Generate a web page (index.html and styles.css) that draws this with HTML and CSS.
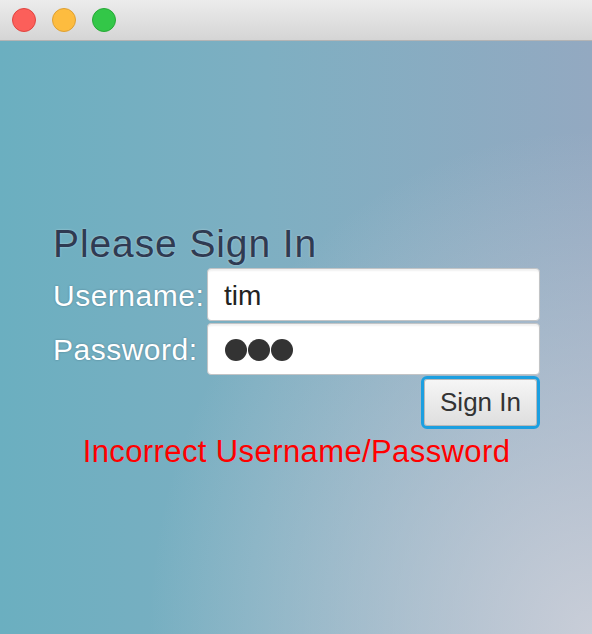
FILE: index.html
```html
<!DOCTYPE html>
<html>
<head>
<meta charset="utf-8">
<link rel="stylesheet" href="styles.css">
</head>
<body>
<div class="window">
  <div class="titlebar">
    <span class="light red"></span>
    <span class="light yellow"></span>
    <span class="light green"></span>
  </div>
  <div class="content">
    <div class="form">
      <h1 class="title">Please Sign In</h1>
      <label class="label">Username:</label>
      <div class="field"><span class="value">tim</span></div>
      <label class="label">Password:</label>
      <div class="field"><span class="dots"><span class="dot"></span><span class="dot"></span><span class="dot"></span></span></div>
      <div class="actions"><button class="btn">Sign In</button></div>
      <p class="error">Incorrect Username/Password</p>
    </div>
  </div>
</div>
</body>
</html>
```
FILE: styles.css
```css
html, body {
  margin: 0;
  padding: 0;
}
body {
  width: 592px;
  height: 634px;
  overflow: hidden;
  font-family: "Liberation Sans", Arial, sans-serif;
}
.window {
  width: 592px;
  height: 634px;
  display: flex;
  flex-direction: column;
}
.titlebar {
  height: 40px;
  flex: none;
  background: linear-gradient(to bottom, #ececec, #d5d5d5);
  border-bottom: 1px solid #b4b4b4;
  display: flex;
  align-items: center;
  gap: 16px;
  padding-left: 12px;
  box-sizing: content-box;
}
.light {
  width: 22px;
  height: 22px;
  border-radius: 50%;
  border: 1px solid;
}
.red { background: #fc5f5a; border-color: #e0443f; }
.yellow { background: #fdbc3f; border-color: #dea033; }
.green { background: #33c748; border-color: #27a936; }
.content {
  flex: 1;
  background:
    radial-gradient(ellipse 75% 85% at 100% 100%, rgba(210,212,220,0.85), rgba(210,212,220,0) 100%),
    linear-gradient(to right, #6bafc0 0%, #7eafc2 45%, #93a9c1 100%);
}
.form {
  display: grid;
  grid-template-columns: 154px 333px;
  row-gap: 2px;
  padding: 181px 0 0 53px;
}
.title {
  grid-column: 1 / 3;
  margin: 0;
  font-weight: normal;
  font-size: 39px;
  letter-spacing: 0.9px;
  line-height: 44px;
  height: 44px;
  color: #2f3b52;
  text-shadow: 0 0 2px rgba(255,255,255,0.5);
}
.label {
  color: #ffffff;
  font-size: 30px;
  letter-spacing: 0.5px;
  line-height: 30px;
  align-self: center;
  padding-top: 2px;
  text-shadow: 0 0 2px rgba(40,60,80,0.45);
}
.field {
  height: 51px;
  border: 1px solid #c2c4c6;
  border-radius: 4px;
  background: #fff;
  box-shadow: inset 0 2px 2px rgba(0,0,0,0.06);
  display: flex;
  align-items: center;
  padding-left: 16px;
}
.field + .label + .field { height: 50px; }
.value {
  font-size: 28px;
  color: #222;
  padding-top: 2px;
}
.dots {
  display: flex;
  gap: 1px;
  margin-left: 1px;
  padding-top: 1px;
}
.dot {
  width: 22px;
  height: 22px;
  border-radius: 50%;
  background: #333;
}
.actions {
  grid-column: 1 / 3;
  display: flex;
  justify-content: flex-end;
  margin-top: -1px;
}
.btn {
  width: 119px;
  height: 53px;
  border: 3px solid #1c9fe0;
  border-radius: 6px;
  padding: 0;
  background: linear-gradient(to bottom, #f6f6f6, #dedede);
  box-shadow: inset 0 0 0 1px #b9b9b9;
  font-family: "Liberation Sans", Arial, sans-serif;
  font-size: 26px;
  color: #333;
  display: flex;
  align-items: center;
  justify-content: center;
}
.error {
  grid-column: 1 / 3;
  margin: 3px 0 0;
  text-align: center;
  color: #ff0000;
  font-size: 31px;
  letter-spacing: 0.4px;
  line-height: 36px;
}
```
